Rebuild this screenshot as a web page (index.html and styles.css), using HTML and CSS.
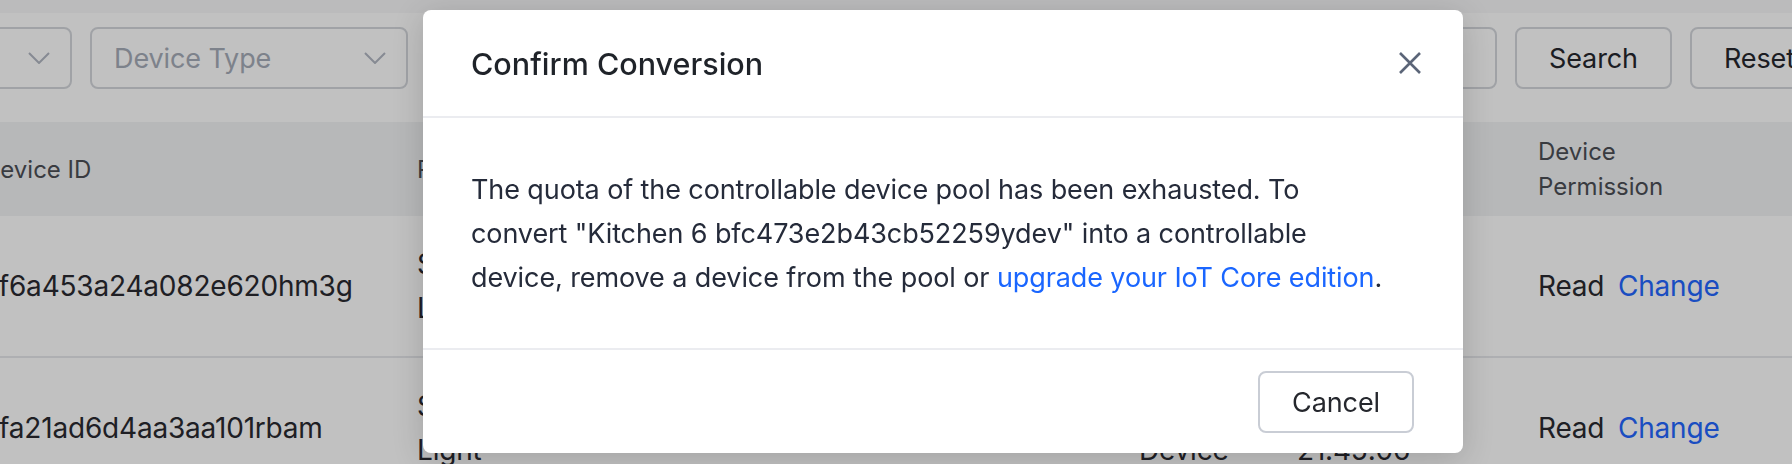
FILE: index.html
```html
<!DOCTYPE html>
<html lang="en">
<head>
    <meta charset="UTF-8">
    <meta name="viewport" content="width=device-width, initial-scale=1.0">
    <title>Devices</title>
    <link rel="stylesheet" href="styles.css">
</head>
<body>
   <div class="page">
       <div class="topbar"></div>
       <div class="filters">
           <div class="filter-group">
               <div class="select select-short">
                   <span class="placeholder"></span>
                   <svg class="chevron" width="22" height="12" viewBox="0 0 22 12"><polyline points="1,1 11,11 21,1"/></svg>
               </div>
               <div class="select">
                   <span class="placeholder">Device Type</span>
                   <svg class="chevron" width="22" height="12" viewBox="0 0 22 12"><polyline points="1,1 11,11 21,1"/></svg>
               </div>
           </div>
           <div class="filter-group">
               <div class="select"><span class="placeholder">Device Name</span></div>
               <button class="btn">Search</button>
               <button class="btn">Reset</button>
           </div>
       </div>
       <table class="devices">
           <colgroup>
               <col style="width:434px">
               <col style="width:160px">
               <col style="width:562px">
               <col style="width:158px">
               <col style="width:241px">
               <col style="width:323px">
           </colgroup>
           <thead>
               <tr>
                   <th>Device ID</th>
                   <th>Product</th>
                   <th>Device Name</th>
                   <th>Type</th>
                   <th>Created</th>
                   <th><span class="th-wrap">Device Permission</span></th>
               </tr>
           </thead>
           <tbody>
               <tr>
                   <td class="mono-id">cf6a453a24a082e620hm3g</td>
                   <td>Smart Light</td>
                   <td>Living Room 2</td>
                   <td>Normal Device</td>
                   <td>2023-03-21 21:45:06</td>
                   <td>Read <a href="#" class="link">Change</a></td>
               </tr>
               <tr>
                   <td class="mono-id">efa21ad6d4aa3aa101rbam</td>
                   <td>Smart Light</td>
                   <td>Bedroom 1</td>
                   <td>Normal Device</td>
                   <td>2023-03-21 21:45:06</td>
                   <td>Read <a href="#" class="link">Change</a></td>
               </tr>
           </tbody>
       </table>
   </div>

   <div class="modal-mask"></div>
   <div class="modal">
       <div class="modal-header">
           <span class="modal-title">Confirm Conversion</span>
           <svg class="modal-close" width="24" height="24" viewBox="0 0 24 24"><path d="M2 2 L22 22 M22 2 L2 22"/></svg>
       </div>
       <div class="modal-body">
           The quota of the controllable device pool has been exhausted. To<br>
           convert "Kitchen 6 bfc473e2b43cb52259ydev" into a controllable<br>
           device, remove a device from the pool or <a href="#">upgrade your IoT Core edition</a>.
       </div>
       <div class="modal-footer">
           <button class="btn btn-cancel">Cancel</button>
       </div>
   </div>
</body>
</html>
```
FILE: styles.css
```css
body{
    margin:0;
    width:1792px;
    height:464px;
    overflow:hidden;
    background-color:#fff;
    font-family:Inter, "Noto Sans", sans-serif;
}
.page{
    margin-left:-33px;
    width:1878px;
}
.topbar{
    height:13px;
    background-color:#f8f8f9;
}
.filters{
    display:flex;
    justify-content:space-between;
    padding:14px 16px 33px 0;
}
.filter-group{
    display:flex;
    gap:18px;
}
.select{
    width:318px;
    height:62px;
    box-sizing:border-box;
    border:2px solid #d4d7dc;
    border-radius:8px;
    display:flex;
    align-items:center;
    justify-content:space-between;
    padding:0 20px 0 22px;
    font-size:27px;
    letter-spacing:-0.1px;
}
.select-short{
    width:105px;
}
.placeholder{
    color:#a6acb8;
}
.chevron polyline{
    fill:none;
    stroke:#b2b7c2;
    stroke-width:2;
}
.btn{
    height:62px;
    box-sizing:border-box;
    border:2px solid #d4d7dc;
    border-radius:8px;
    background-color:#fff;
    font-family:inherit;
    font-size:27px;
    letter-spacing:-0.1px;
    color:#25272d;
    padding:0 32px;
}
.devices{
    width:100%;
    border-collapse:collapse;
    table-layout:fixed;
}
.devices th{
    background-color:#f2f3f5;
    font-size:24px;
    line-height:35px;
    font-weight:400;
    color:#4c4f55;
    text-align:left;
    padding:12px 16px;
    white-space:nowrap;
    overflow:hidden;
}
.th-wrap{
    display:block;
    width:180px;
    white-space:normal;
}
.devices td{
    font-size:28px;
    line-height:44px;
    letter-spacing:-0.2px;
    color:#292a30;
    padding:26px 16px;
    border-bottom:2px solid #e6e8eb;
    vertical-align:middle;
    overflow:hidden;
}
.mono-id{
    white-space:nowrap;
}
.link{
    color:#2366ff;
    text-decoration:none;
    margin-left:6px;
}

.modal-mask{
    position:fixed;
    top:0;
    left:0;
    right:0;
    bottom:0;
    background-color:rgba(0,0,0,0.245);
}
.modal{
    position:absolute;
    left:423px;
    top:10px;
    width:1040px;
    background-color:#fff;
    border-radius:8px;
    box-shadow:0 6px 32px rgba(0,0,0,0.16);
}
.modal-header{
    height:108px;
    box-sizing:border-box;
    padding:0 41px 0 48px;
    display:flex;
    align-items:center;
    justify-content:space-between;
    border-bottom:2px solid #ebecf0;
}
.modal-title{
    font-size:30.5px;
    font-weight:500;
    color:#1f2329;
}
.modal-close path{
    fill:none;
    stroke:#5b6578;
    stroke-width:2.6;
}
.modal-body{
    padding:50px 48px 48px;
    font-size:27px;
    letter-spacing:-0.1px;
    line-height:44px;
    color:#252b3a;
}
.modal-body a{
    color:#1a66ff;
    text-decoration:none;
}
.modal-footer{
    border-top:2px solid #ebecf0;
    padding:21px 49px 20px;
    display:flex;
    justify-content:flex-end;
}
.btn-cancel{
    width:156px;
    padding:0;
    border-color:#c9cdd5;
}
```
